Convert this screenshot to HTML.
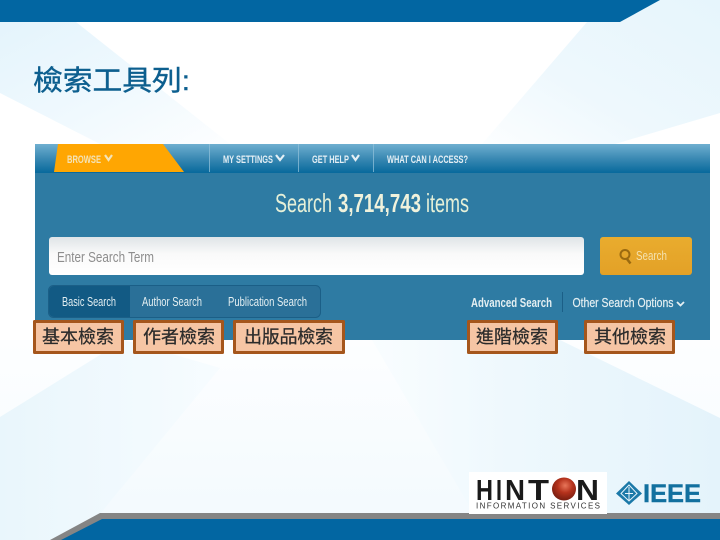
<!DOCTYPE html>
<html><head><meta charset="utf-8"><style>
html,body{margin:0;padding:0;width:720px;height:540px;overflow:hidden;background:#fff}
svg{display:block}
.cjk{font-family:"Liberation Sans","Noto Sans CJK TC",sans-serif}
.l{font-family:"Liberation Sans",sans-serif}
</style></head><body>
<svg width="720" height="540" viewBox="0 0 720 540" xmlns="http://www.w3.org/2000/svg">
<defs>
<linearGradient id="nav" x1="0" y1="0" x2="0" y2="1"><stop offset="0" stop-color="#6fafd0"/><stop offset=".5" stop-color="#3a89b3"/><stop offset="1" stop-color="#07699c"/></linearGradient>
<linearGradient id="inp" x1="0" y1="0" x2="0" y2="1"><stop offset="0" stop-color="#dfe4e7"/><stop offset=".45" stop-color="#fafafa"/><stop offset="1" stop-color="#fff"/></linearGradient>
<linearGradient id="btn" x1="0" y1="0" x2="0" y2="1"><stop offset="0" stop-color="#e9ac2e"/><stop offset="1" stop-color="#e3a127"/></linearGradient>
<radialGradient id="ball" cx=".55" cy=".35" r=".7"><stop offset="0" stop-color="#e8765a"/><stop offset=".45" stop-color="#b5321c"/><stop offset="1" stop-color="#6d1a0e"/></radialGradient>
<linearGradient id="tl" x1="0" y1="0" x2="1" y2="1"><stop offset="0" stop-color="#e4f4fc"/><stop offset=".55" stop-color="#f0f9fe"/><stop offset="1" stop-color="#fdfeff"/></linearGradient>
<linearGradient id="tr" x1="1" y1="0" x2="0" y2="1"><stop offset="0" stop-color="#e6f5fc"/><stop offset=".6" stop-color="#eef8fd"/><stop offset="1" stop-color="#fcfeff"/></linearGradient>
<linearGradient id="bl" x1="0" y1="0" x2="1" y2="0"><stop offset="0" stop-color="#e9f6fc"/><stop offset="1" stop-color="#f7fcff"/></linearGradient>
<linearGradient id="br" x1="1" y1="0" x2="0" y2="0"><stop offset="0" stop-color="#e4f3fb"/><stop offset=".6" stop-color="#eef8fd"/><stop offset="1" stop-color="#f9fdff"/></linearGradient>
<linearGradient id="bc" x1="0" y1="0" x2="0" y2="1"><stop offset="0" stop-color="#fdfeff"/><stop offset="1" stop-color="#f4fbfe"/></linearGradient>
<linearGradient id="cc" x1="0" y1="0" x2="0" y2="1"><stop offset="0" stop-color="#fdfeff"/><stop offset="1" stop-color="#f3fafe"/></linearGradient>
</defs>
<rect width="720" height="540" fill="#fff"/>
<polygon points="0,22 76,22 230,144 100,144 0,93" fill="url(#tl)"/>
<polygon points="587,22 620,22 660,0 720,0 720,113 615,144 482,144" fill="url(#tr)"/>
<polygon points="0,340 720,340 720,540 0,540" fill="url(#bc)"/>
<polygon points="124,340 372,340 480,520 90,520 220,368" fill="url(#cc)"/>
<polygon points="0,417 124,340 220,368 100,514 50,540 0,540" fill="url(#bl)"/>
<polygon points="372,340 560,340 720,418 720,514 474,514" fill="url(#br)"/>
<polygon points="0,22 0,0 660,0 620,22" fill="#0266a2"/>
<polygon points="50,540 100,513 720,513 720,540" fill="#858585"/>
<polygon points="61,540 102,519 720,519 720,540" fill="#0266a2"/>

<text x="33" y="90" class="cjk" font-size="28" fill="#0d5f8f" stroke="#0d5f8f" stroke-width=".4" textLength="157" lengthAdjust="spacingAndGlyphs">檢索工具列:</text>

<!-- panel -->
<rect x="35" y="144" width="675" height="196" fill="#2e7ba3"/>
<rect x="35" y="144" width="675" height="29" fill="url(#nav)"/>
<polygon points="58,144 163,144 184,172 54,172" fill="#ffa602"/>
<g stroke="#8fc0d9" stroke-width="1" opacity=".75"><line x1="209.500" y1="144" x2="209.500" y2="172"/><line x1="298.500" y1="144" x2="298.500" y2="172"/><line x1="373.500" y1="144" x2="373.500" y2="172"/></g>
<g class="l" font-size="11" font-weight="bold">
<text x="67" y="163" fill="#f3e3b8" textLength="34" lengthAdjust="spacingAndGlyphs">BROWSE</text>
<text x="223" y="163" fill="#e4eff5" textLength="50" lengthAdjust="spacingAndGlyphs">MY SETTINGS</text>
<text x="312" y="163" fill="#e4eff5" textLength="37" lengthAdjust="spacingAndGlyphs">GET HELP</text>
<text x="387" y="163" fill="#e4eff5" textLength="81" lengthAdjust="spacingAndGlyphs">WHAT CAN I ACCESS?</text>
</g>
<g fill="none" stroke-width="2.200">
<path d="M105 155l3.500 5 3.500-5" stroke="#f3e3b8"/>
<path d="M276 155l4 5 4-5" stroke="#e4eff5"/>
<path d="M352 155l3.500 5 3.500-5" stroke="#e4eff5"/>
</g>
<text x="275" y="212" class="l" font-size="26" fill="#e6f0d8" textLength="57" lengthAdjust="spacingAndGlyphs">Search</text>
<text x="338" y="212" class="l" font-size="26" font-weight="bold" fill="#f0f2dc" textLength="83" lengthAdjust="spacingAndGlyphs">3,714,743</text>
<text x="426" y="212" class="l" font-size="26" fill="#e6f0d8" textLength="43" lengthAdjust="spacingAndGlyphs">items</text>

<rect x="49" y="237" width="535" height="38" rx="3" fill="url(#inp)"/>
<text x="57" y="262" class="l" font-size="15" fill="#8d8d8d" textLength="97" lengthAdjust="spacingAndGlyphs">Enter Search Term</text>
<rect x="600" y="237" width="92" height="38" rx="3" fill="url(#btn)"/>
<circle cx="625" cy="254.500" r="4.500" fill="none" stroke="#9a6a10" stroke-width="2"/>
<path d="M627 259l3.500 4.500" stroke="#9a6a10" stroke-width="2.500"/>
<text x="636" y="260" class="l" font-size="13" fill="#f4e1ae" textLength="31" lengthAdjust="spacingAndGlyphs">Search</text>

<rect x="48.500" y="285.500" width="272" height="32" rx="5" fill="#2a7098" stroke="#1b5f87"/>
<path d="M54 286h76v31h-76a5 5 0 0 1-5-5v-21a5 5 0 0 1 5-5z" fill="#125a84"/>
<g class="l" font-size="13" fill="#e4eff2">
<text x="62" y="306" textLength="54" lengthAdjust="spacingAndGlyphs">Basic Search</text>
<text x="142" y="306" textLength="60" lengthAdjust="spacingAndGlyphs">Author Search</text>
<text x="228" y="306" textLength="79" lengthAdjust="spacingAndGlyphs">Publication Search</text>
</g>
<g class="l" font-size="13" font-weight="bold" fill="#e4eff2">
<text x="471" y="307" textLength="81" lengthAdjust="spacingAndGlyphs">Advanced Search</text>
</g>
<text x="572.500" y="307" class="l" font-size="13" fill="#e4eff2" stroke="#e4eff2" stroke-width=".2" textLength="101" lengthAdjust="spacingAndGlyphs">Other Search Options</text>
<line x1="562.500" y1="292" x2="562.500" y2="312" stroke="#1b5f87"/>
<path d="M677 302l3.500 3.500 3.500-3.500" fill="none" stroke="#e4eff2" stroke-width="1.800"/>

<!-- labels -->
<g fill="#f6c5a4" stroke="#a5561c" stroke-width="3" stroke-linejoin="round">
<rect x="34.500" y="321.500" width="88" height="31"/>
<rect x="134.500" y="321.500" width="88" height="31"/>
<rect x="234.500" y="321.500" width="109" height="31"/>
<rect x="468.500" y="321.500" width="88" height="31"/>
<rect x="585.500" y="321.500" width="88" height="31"/>
</g>
<g class="cjk" font-size="18" fill="#2b2b2b" stroke="#2b2b2b" stroke-width=".25">
<text x="42" y="343" textLength="72" lengthAdjust="spacing">基本檢索</text>
<text x="143" y="343" textLength="72" lengthAdjust="spacing">作者檢索</text>
<text x="244" y="343" textLength="89" lengthAdjust="spacing">出版品檢索</text>
<text x="476" y="343" textLength="72" lengthAdjust="spacing">進階檢索</text>
<text x="594" y="343" textLength="72" lengthAdjust="spacing">其他檢索</text>
</g>

<!-- logos -->
<rect x="469" y="472" width="138" height="42" fill="#fff"/>
<g class="l" font-size="29" font-weight="bold" fill="#1a1a1a">
<text x="476" y="500" textLength="17" lengthAdjust="spacingAndGlyphs">H</text>
<text x="496" y="500" textLength="6" lengthAdjust="spacingAndGlyphs">I</text>
<text x="505" y="500" textLength="20" lengthAdjust="spacingAndGlyphs">N</text>
<text x="528" y="500" textLength="21" lengthAdjust="spacingAndGlyphs">T</text>
<text x="576" y="500" textLength="23" lengthAdjust="spacingAndGlyphs">N</text>
</g>
<ellipse cx="564" cy="489" rx="12" ry="11.500" fill="url(#ball)"/>
<text x="476" y="508.500" class="l" font-size="8" fill="#333" textLength="124" lengthAdjust="spacing">INFORMATION SERVICES</text>
<polygon points="629,481 642,493.500 629,505 616,493.500" fill="#1b79a8"/>
<polygon points="629,485 637,493.500 629,501 621,493.500" fill="none" stroke="#e8f5fd" stroke-width="1"/>
<path d="M629 487v13M625 493.500h8" stroke="#e8f5fd" stroke-width="1" fill="none"/>
<text x="643" y="502" class="l" font-size="25" font-weight="bold" fill="#12709f" stroke="#12709f" stroke-width=".4" textLength="58" lengthAdjust="spacingAndGlyphs">IEEE</text>
</svg>
</body></html>
